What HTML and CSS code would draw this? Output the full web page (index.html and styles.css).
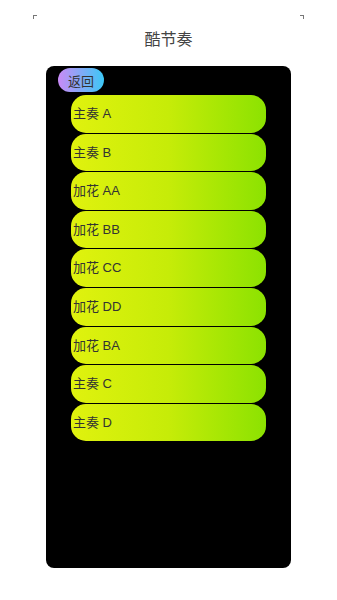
FILE: index.html
```html
<!DOCTYPE html>
<html lang="zh">
<head>
    <meta charset="UTF-8">
    <meta name="viewport" content="width=device-width, initial-scale=1.0">
    <title>酷节奏</title>
    <link rel="stylesheet" href="styles.css">
</head>
<body>
    <div class="header">
        <span class="corner corner-left"></span>
        <h1 class="title">酷节奏</h1>
        <span class="corner corner-right"></span>
    </div>

    <div class="panel">
        <button class="back">返回</button>
        <div class="list">
            <div class="item">主奏 A</div>
            <div class="item">主奏 B</div>
            <div class="item">加花 AA</div>
            <div class="item">加花 BB</div>
            <div class="item">加花 CC</div>
            <div class="item">加花 DD</div>
            <div class="item">加花 BA</div>
            <div class="item">主奏 C</div>
            <div class="item">主奏 D</div>
        </div>
    </div>
</body>
</html>
```

FILE: styles.css
```css
body {
    margin: 0;
    background: #fff;
    font-family: "Liberation Sans", "Noto Sans CJK SC", sans-serif;
}
.header {
    position: relative;
    height: 66px;
}
.title {
    margin: 0;
    padding-top: 29px;
    text-align: center;
    font-size: 16px;
    font-weight: normal;
    line-height: 22px;
    color: #444;
}
.corner {
    position: absolute;
    top: 15px;
    width: 3px;
    height: 3px;
    border-top: 1px solid #777;
}
.corner-left {
    left: 33px;
    border-left: 1px solid #777;
}
.corner-right {
    left: 300px;
    border-right: 1px solid #777;
}
.panel {
    margin-left: 46px;
    width: 245px;
    height: 502px;
    background: #000;
    border-radius: 8px;
    padding-top: 2px;
    box-sizing: border-box;
}
.back {
    display: block;
    margin-left: 12px;
    width: 46px;
    height: 24px;
    padding: 0;
    border: none;
    border-radius: 12px;
    background: linear-gradient(to right, #c98af6, #3cc8f6);
    font-family: inherit;
    font-size: 13px;
    color: #333;
}
.list {
    margin: 3px 25px 0;
    display: flex;
    flex-direction: column;
    gap: 1px;
}
.item {
    height: 37.6px;
    line-height: 37.6px;
    padding-left: 2px;
    border-radius: 15px;
    background: linear-gradient(to right, #e0f20e, #c6ec08 50%, #8ce201);
    font-size: 13px;
    color: #333;
}
```
